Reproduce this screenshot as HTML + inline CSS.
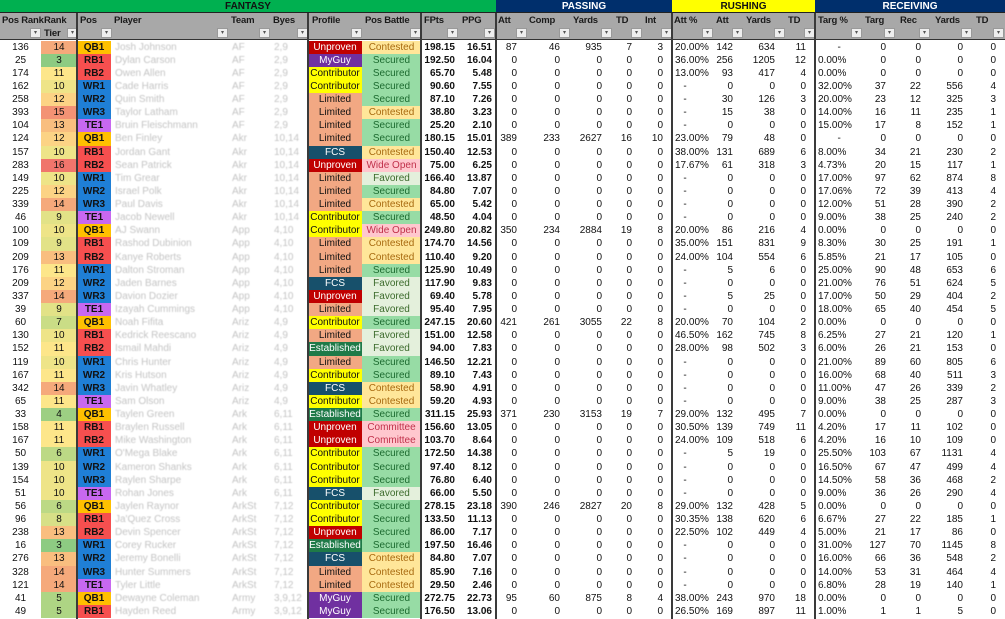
<!DOCTYPE html>
<html><head><meta charset="utf-8">
<style>
*{margin:0;padding:0;box-sizing:border-box}
body{width:1005px;height:619px;overflow:hidden;background:#fff;font-family:"Liberation Sans",sans-serif;font-size:10px;color:#111;position:relative}
.g{position:absolute;top:0;height:13px;font-weight:bold;font-size:10px;text-align:center;line-height:13px;border-bottom:1px solid #222}
.hd{position:absolute;top:13px;height:27px;background:#a8a8a8;border-bottom:1px solid #333}
.hl{position:absolute;top:15px;font-weight:bold;font-size:9.5px;letter-spacing:-0.2px;color:#1a1a1a}
.fb{position:absolute;top:28px;width:11px;height:10px;background:#eee;border:1px solid #999;font-size:6px;line-height:8px;text-align:center;color:#555}
.vl{position:absolute;top:13px;width:2px;height:606px;background:#3a3a3a}
table{position:absolute;top:40.5px;left:0;border-collapse:collapse;table-layout:fixed;width:1005px}
td{height:13.14px;line-height:13px;padding:0;white-space:nowrap;overflow:hidden;font-size:10px}
td:nth-child(1),td:nth-child(2),td:nth-child(3),td:nth-child(7),td:nth-child(8){text-align:center}
td:nth-child(3){font-weight:bold}
td:nth-child(4),td:nth-child(5),td:nth-child(6){padding-left:4px;color:#c4c4c4;filter:blur(0.6px)}
td:nth-child(9),td:nth-child(10){text-align:right;padding-right:4px;font-weight:bold}
td:nth-child(n+11){text-align:right;padding-right:9px}
td:nth-child(16),td:nth-child(20){text-align:left;padding-left:3px;padding-right:0}
.t3{background:#8dcb82}.t4{background:#9dcf83}.t5{background:#aed584}.t6{background:#bcd985}.t7{background:#cadd86}.t8{background:#d7e087}.t9{background:#e2e287}.t10{background:#eee488}.t11{background:#fde68a}.t12{background:#fcd385}.t13{background:#f9be7f}.t14{background:#f5a97b}.t15{background:#f39274}.t16{background:#f0756c}
.q{background:#ffc000}.r{background:#f64f4f}.w{background:#1f7fd6}.e{background:#c868f0}
.pU{background:#c00000;color:#fff}.pM{background:#7030a0;color:#fff}.pC{background:#ffff00}.pL{background:#f2a883}.pF{background:#17506b;color:#fff}.pE{background:#1f7a48;color:#fff}
.bS{background:#97dca5;color:#1d6b30}.bC{background:#ffe699;color:#a86a10}.bW{background:#ffc7ce;color:#c0304a}.bF{background:#e4f0dc;color:#3c6b2c}
</style></head><body>
<div class="g" style="left:0;width:496px;background:#00b050;color:#111">FANTASY</div>
<div class="g" style="left:496px;width:176px;background:#002f6c;color:#fff">PASSING</div>
<div class="g" style="left:672px;width:143px;background:#ffff00;color:#111">RUSHING</div>
<div class="g" style="left:815px;width:190px;background:#002f6c;color:#fff">RECEIVING</div>
<div class="hd" style="left:0;width:1005px"></div>
<div class="hl" style="left:2px">Pos Rank</div>
<div class="hl" style="left:44px">Rank</div><div class="hl" style="left:44px;top:28px">Tier</div>
<div class="hl" style="left:80px">Pos</div>
<div class="hl" style="left:114px">Player</div>
<div class="hl" style="left:231px">Team</div>
<div class="hl" style="left:273px">Byes</div>
<div class="hl" style="left:312px">Profile</div>
<div class="hl" style="left:365px">Pos Battle</div>
<div class="hl" style="left:424px">FPts</div>
<div class="hl" style="left:462px">PPG</div>
<div class="hl" style="left:498px">Att</div>
<div class="hl" style="left:529px">Comp</div>
<div class="hl" style="left:573px">Yards</div>
<div class="hl" style="left:616px">TD</div>
<div class="hl" style="left:645px">Int</div>
<div class="hl" style="left:674px">Att %</div>
<div class="hl" style="left:716px">Att</div>
<div class="hl" style="left:746px">Yards</div>
<div class="hl" style="left:788px">TD</div>
<div class="hl" style="left:818px">Targ %</div>
<div class="hl" style="left:865px">Targ</div>
<div class="hl" style="left:900px">Rec</div>
<div class="hl" style="left:935px">Yards</div>
<div class="hl" style="left:976px">TD</div>
<div class="fb" style="left:30px">▾</div><div class="fb" style="left:67px">▾</div><div class="fb" style="left:101px">▾</div><div class="fb" style="left:217px">▾</div><div class="fb" style="left:259px">▾</div><div class="fb" style="left:297px">▾</div><div class="fb" style="left:351px">▾</div><div class="fb" style="left:410px">▾</div><div class="fb" style="left:447px">▾</div><div class="fb" style="left:484px">▾</div>
<div class="fb" style="left:516px">▾</div><div class="fb" style="left:559px">▾</div><div class="fb" style="left:601px">▾</div><div class="fb" style="left:631px">▾</div><div class="fb" style="left:661px">▾</div>
<div class="fb" style="left:702px">▾</div><div class="fb" style="left:732px">▾</div><div class="fb" style="left:774px">▾</div><div class="fb" style="left:804px">▾</div>
<div class="fb" style="left:851px">▾</div><div class="fb" style="left:884px">▾</div><div class="fb" style="left:919px">▾</div><div class="fb" style="left:961px">▾</div><div class="fb" style="left:993px">▾</div>
<table>
<colgroup><col style="width:41px"><col style="width:36px"><col style="width:34px"><col style="width:117px"><col style="width:42px"><col style="width:38px"><col style="width:54px"><col style="width:59px"><col style="width:38px"><col style="width:37px"><col style="width:30px"><col style="width:43px"><col style="width:42px"><col style="width:30px"><col style="width:31px"><col style="width:40px"><col style="width:30px"><col style="width:42px"><col style="width:31px"><col style="width:47px"><col style="width:33px"><col style="width:35px"><col style="width:42px"><col style="width:33px"></colgroup>
<tr><td>136</td><td class="t14">14</td><td class="q">QB1</td><td>Josh Johnson</td><td>AF</td><td>2,9</td><td class="pU">Unproven</td><td class="bC">Contested</td><td>198.15</td><td>16.51</td><td>87</td><td>46</td><td>935</td><td>7</td><td>3</td><td>20.00%</td><td>142</td><td>634</td><td>11</td><td>&nbsp;&nbsp;&nbsp;&nbsp;&nbsp;&nbsp;&nbsp;-</td><td>0</td><td>0</td><td>0</td><td>0</td></tr>
<tr><td>25</td><td class="t3">3</td><td class="r">RB1</td><td>Dylan Carson</td><td>AF</td><td>2,9</td><td class="pM">MyGuy</td><td class="bS">Secured</td><td>192.50</td><td>16.04</td><td>0</td><td>0</td><td>0</td><td>0</td><td>0</td><td>36.00%</td><td>256</td><td>1205</td><td>12</td><td>0.00%</td><td>0</td><td>0</td><td>0</td><td>0</td></tr>
<tr><td>174</td><td class="t11">11</td><td class="r">RB2</td><td>Owen Allen</td><td>AF</td><td>2,9</td><td class="pC">Contributor</td><td class="bS">Secured</td><td>65.70</td><td>5.48</td><td>0</td><td>0</td><td>0</td><td>0</td><td>0</td><td>13.00%</td><td>93</td><td>417</td><td>4</td><td>0.00%</td><td>0</td><td>0</td><td>0</td><td>0</td></tr>
<tr><td>162</td><td class="t10">10</td><td class="w">WR1</td><td>Cade Harris</td><td>AF</td><td>2,9</td><td class="pC">Contributor</td><td class="bS">Secured</td><td>90.60</td><td>7.55</td><td>0</td><td>0</td><td>0</td><td>0</td><td>0</td><td>&nbsp;&nbsp;&nbsp;-</td><td>0</td><td>0</td><td>0</td><td>32.00%</td><td>37</td><td>22</td><td>556</td><td>4</td></tr>
<tr><td>258</td><td class="t12">12</td><td class="w">WR2</td><td>Quin Smith</td><td>AF</td><td>2,9</td><td class="pL">Limited</td><td class="bS">Secured</td><td>87.10</td><td>7.26</td><td>0</td><td>0</td><td>0</td><td>0</td><td>0</td><td>&nbsp;&nbsp;&nbsp;-</td><td>30</td><td>126</td><td>3</td><td>20.00%</td><td>23</td><td>12</td><td>325</td><td>3</td></tr>
<tr><td>393</td><td class="t15">15</td><td class="w">WR3</td><td>Taylor Latham</td><td>AF</td><td>2,9</td><td class="pL">Limited</td><td class="bC">Contested</td><td>38.80</td><td>3.23</td><td>0</td><td>0</td><td>0</td><td>0</td><td>0</td><td>&nbsp;&nbsp;&nbsp;-</td><td>15</td><td>38</td><td>0</td><td>14.00%</td><td>16</td><td>11</td><td>235</td><td>1</td></tr>
<tr><td>104</td><td class="t13">13</td><td class="e">TE1</td><td>Bruin Fleischmann</td><td>AF</td><td>2,9</td><td class="pL">Limited</td><td class="bS">Secured</td><td>25.20</td><td>2.10</td><td>0</td><td>0</td><td>0</td><td>0</td><td>0</td><td>&nbsp;&nbsp;&nbsp;-</td><td>0</td><td>0</td><td>0</td><td>15.00%</td><td>17</td><td>8</td><td>152</td><td>1</td></tr>
<tr><td>124</td><td class="t12">12</td><td class="q">QB1</td><td>Ben Finley</td><td>Akr</td><td>10,14</td><td class="pL">Limited</td><td class="bS">Secured</td><td>180.15</td><td>15.01</td><td>389</td><td>233</td><td>2627</td><td>16</td><td>10</td><td>23.00%</td><td>79</td><td>48</td><td>0</td><td>&nbsp;&nbsp;&nbsp;&nbsp;&nbsp;&nbsp;&nbsp;-</td><td>0</td><td>0</td><td>0</td><td>0</td></tr>
<tr><td>157</td><td class="t10">10</td><td class="r">RB1</td><td>Jordan Gant</td><td>Akr</td><td>10,14</td><td class="pF">FCS</td><td class="bC">Contested</td><td>150.40</td><td>12.53</td><td>0</td><td>0</td><td>0</td><td>0</td><td>0</td><td>38.00%</td><td>131</td><td>689</td><td>6</td><td>8.00%</td><td>34</td><td>21</td><td>230</td><td>2</td></tr>
<tr><td>283</td><td class="t16">16</td><td class="r">RB2</td><td>Sean Patrick</td><td>Akr</td><td>10,14</td><td class="pU">Unproven</td><td class="bW">Wide Open</td><td>75.00</td><td>6.25</td><td>0</td><td>0</td><td>0</td><td>0</td><td>0</td><td>17.67%</td><td>61</td><td>318</td><td>3</td><td>4.73%</td><td>20</td><td>15</td><td>117</td><td>1</td></tr>
<tr><td>149</td><td class="t10">10</td><td class="w">WR1</td><td>Tim Grear</td><td>Akr</td><td>10,14</td><td class="pL">Limited</td><td class="bF">Favored</td><td>166.40</td><td>13.87</td><td>0</td><td>0</td><td>0</td><td>0</td><td>0</td><td>&nbsp;&nbsp;&nbsp;-</td><td>0</td><td>0</td><td>0</td><td>17.00%</td><td>97</td><td>62</td><td>874</td><td>8</td></tr>
<tr><td>225</td><td class="t12">12</td><td class="w">WR2</td><td>Israel Polk</td><td>Akr</td><td>10,14</td><td class="pL">Limited</td><td class="bS">Secured</td><td>84.80</td><td>7.07</td><td>0</td><td>0</td><td>0</td><td>0</td><td>0</td><td>&nbsp;&nbsp;&nbsp;-</td><td>0</td><td>0</td><td>0</td><td>17.06%</td><td>72</td><td>39</td><td>413</td><td>4</td></tr>
<tr><td>339</td><td class="t14">14</td><td class="w">WR3</td><td>Paul Davis</td><td>Akr</td><td>10,14</td><td class="pL">Limited</td><td class="bC">Contested</td><td>65.00</td><td>5.42</td><td>0</td><td>0</td><td>0</td><td>0</td><td>0</td><td>&nbsp;&nbsp;&nbsp;-</td><td>0</td><td>0</td><td>0</td><td>12.00%</td><td>51</td><td>28</td><td>390</td><td>2</td></tr>
<tr><td>46</td><td class="t9">9</td><td class="e">TE1</td><td>Jacob Newell</td><td>Akr</td><td>10,14</td><td class="pC">Contributor</td><td class="bS">Secured</td><td>48.50</td><td>4.04</td><td>0</td><td>0</td><td>0</td><td>0</td><td>0</td><td>&nbsp;&nbsp;&nbsp;-</td><td>0</td><td>0</td><td>0</td><td>9.00%</td><td>38</td><td>25</td><td>240</td><td>2</td></tr>
<tr><td>100</td><td class="t10">10</td><td class="q">QB1</td><td>AJ Swann</td><td>App</td><td>4,10</td><td class="pC">Contributor</td><td class="bW">Wide Open</td><td>249.80</td><td>20.82</td><td>350</td><td>234</td><td>2884</td><td>19</td><td>8</td><td>20.00%</td><td>86</td><td>216</td><td>4</td><td>0.00%</td><td>0</td><td>0</td><td>0</td><td>0</td></tr>
<tr><td>109</td><td class="t9">9</td><td class="r">RB1</td><td>Rashod Dubinion</td><td>App</td><td>4,10</td><td class="pL">Limited</td><td class="bC">Contested</td><td>174.70</td><td>14.56</td><td>0</td><td>0</td><td>0</td><td>0</td><td>0</td><td>35.00%</td><td>151</td><td>831</td><td>9</td><td>8.30%</td><td>30</td><td>25</td><td>191</td><td>1</td></tr>
<tr><td>209</td><td class="t13">13</td><td class="r">RB2</td><td>Kanye Roberts</td><td>App</td><td>4,10</td><td class="pL">Limited</td><td class="bC">Contested</td><td>110.40</td><td>9.20</td><td>0</td><td>0</td><td>0</td><td>0</td><td>0</td><td>24.00%</td><td>104</td><td>554</td><td>6</td><td>5.85%</td><td>21</td><td>17</td><td>105</td><td>0</td></tr>
<tr><td>176</td><td class="t11">11</td><td class="w">WR1</td><td>Dalton Stroman</td><td>App</td><td>4,10</td><td class="pL">Limited</td><td class="bS">Secured</td><td>125.90</td><td>10.49</td><td>0</td><td>0</td><td>0</td><td>0</td><td>0</td><td>&nbsp;&nbsp;&nbsp;-</td><td>5</td><td>6</td><td>0</td><td>25.00%</td><td>90</td><td>48</td><td>653</td><td>6</td></tr>
<tr><td>209</td><td class="t12">12</td><td class="w">WR2</td><td>Jaden Barnes</td><td>App</td><td>4,10</td><td class="pF">FCS</td><td class="bF">Favored</td><td>117.90</td><td>9.83</td><td>0</td><td>0</td><td>0</td><td>0</td><td>0</td><td>&nbsp;&nbsp;&nbsp;-</td><td>0</td><td>0</td><td>0</td><td>21.00%</td><td>76</td><td>51</td><td>624</td><td>5</td></tr>
<tr><td>337</td><td class="t14">14</td><td class="w">WR3</td><td>Davion Dozier</td><td>App</td><td>4,10</td><td class="pU">Unproven</td><td class="bF">Favored</td><td>69.40</td><td>5.78</td><td>0</td><td>0</td><td>0</td><td>0</td><td>0</td><td>&nbsp;&nbsp;&nbsp;-</td><td>5</td><td>25</td><td>0</td><td>17.00%</td><td>50</td><td>29</td><td>404</td><td>2</td></tr>
<tr><td>39</td><td class="t9">9</td><td class="e">TE1</td><td>Izayah Cummings</td><td>App</td><td>4,10</td><td class="pL">Limited</td><td class="bF">Favored</td><td>95.40</td><td>7.95</td><td>0</td><td>0</td><td>0</td><td>0</td><td>0</td><td>&nbsp;&nbsp;&nbsp;-</td><td>0</td><td>0</td><td>0</td><td>18.00%</td><td>65</td><td>40</td><td>454</td><td>5</td></tr>
<tr><td>60</td><td class="t7">7</td><td class="q">QB1</td><td>Noah Fifita</td><td>Ariz</td><td>4,9</td><td class="pC">Contributor</td><td class="bS">Secured</td><td>247.15</td><td>20.60</td><td>421</td><td>261</td><td>3055</td><td>22</td><td>8</td><td>20.00%</td><td>70</td><td>104</td><td>2</td><td>0.00%</td><td>0</td><td>0</td><td>0</td><td>0</td></tr>
<tr><td>130</td><td class="t10">10</td><td class="r">RB1</td><td>Kedrick Reescano</td><td>Ariz</td><td>4,9</td><td class="pL">Limited</td><td class="bF">Favored</td><td>151.00</td><td>12.58</td><td>0</td><td>0</td><td>0</td><td>0</td><td>0</td><td>46.50%</td><td>162</td><td>745</td><td>8</td><td>6.25%</td><td>27</td><td>21</td><td>120</td><td>1</td></tr>
<tr><td>152</td><td class="t11">11</td><td class="r">RB2</td><td>Ismail Mahdi</td><td>Ariz</td><td>4,9</td><td class="pE">Established</td><td class="bF">Favored</td><td>94.00</td><td>7.83</td><td>0</td><td>0</td><td>0</td><td>0</td><td>0</td><td>28.00%</td><td>98</td><td>502</td><td>3</td><td>6.00%</td><td>26</td><td>21</td><td>153</td><td>0</td></tr>
<tr><td>119</td><td class="t10">10</td><td class="w">WR1</td><td>Chris Hunter</td><td>Ariz</td><td>4,9</td><td class="pL">Limited</td><td class="bS">Secured</td><td>146.50</td><td>12.21</td><td>0</td><td>0</td><td>0</td><td>0</td><td>0</td><td>&nbsp;&nbsp;&nbsp;-</td><td>0</td><td>0</td><td>0</td><td>21.00%</td><td>89</td><td>60</td><td>805</td><td>6</td></tr>
<tr><td>167</td><td class="t11">11</td><td class="w">WR2</td><td>Kris Hutson</td><td>Ariz</td><td>4,9</td><td class="pC">Contributor</td><td class="bS">Secured</td><td>89.10</td><td>7.43</td><td>0</td><td>0</td><td>0</td><td>0</td><td>0</td><td>&nbsp;&nbsp;&nbsp;-</td><td>0</td><td>0</td><td>0</td><td>16.00%</td><td>68</td><td>40</td><td>511</td><td>3</td></tr>
<tr><td>342</td><td class="t14">14</td><td class="w">WR3</td><td>Javin Whatley</td><td>Ariz</td><td>4,9</td><td class="pF">FCS</td><td class="bC">Contested</td><td>58.90</td><td>4.91</td><td>0</td><td>0</td><td>0</td><td>0</td><td>0</td><td>&nbsp;&nbsp;&nbsp;-</td><td>0</td><td>0</td><td>0</td><td>11.00%</td><td>47</td><td>26</td><td>339</td><td>2</td></tr>
<tr><td>65</td><td class="t11">11</td><td class="e">TE1</td><td>Sam Olson</td><td>Ariz</td><td>4,9</td><td class="pC">Contributor</td><td class="bC">Contested</td><td>59.20</td><td>4.93</td><td>0</td><td>0</td><td>0</td><td>0</td><td>0</td><td>&nbsp;&nbsp;&nbsp;-</td><td>0</td><td>0</td><td>0</td><td>9.00%</td><td>38</td><td>25</td><td>287</td><td>3</td></tr>
<tr><td>33</td><td class="t4">4</td><td class="q">QB1</td><td>Taylen Green</td><td>Ark</td><td>6,11</td><td class="pE">Established</td><td class="bS">Secured</td><td>311.15</td><td>25.93</td><td>371</td><td>230</td><td>3153</td><td>19</td><td>7</td><td>29.00%</td><td>132</td><td>495</td><td>7</td><td>0.00%</td><td>0</td><td>0</td><td>0</td><td>0</td></tr>
<tr><td>158</td><td class="t11">11</td><td class="r">RB1</td><td>Braylen Russell</td><td>Ark</td><td>6,11</td><td class="pU">Unproven</td><td class="bW">Committee</td><td>156.60</td><td>13.05</td><td>0</td><td>0</td><td>0</td><td>0</td><td>0</td><td>30.50%</td><td>139</td><td>749</td><td>11</td><td>4.20%</td><td>17</td><td>11</td><td>102</td><td>0</td></tr>
<tr><td>167</td><td class="t11">11</td><td class="r">RB2</td><td>Mike Washington</td><td>Ark</td><td>6,11</td><td class="pU">Unproven</td><td class="bW">Committee</td><td>103.70</td><td>8.64</td><td>0</td><td>0</td><td>0</td><td>0</td><td>0</td><td>24.00%</td><td>109</td><td>518</td><td>6</td><td>4.20%</td><td>16</td><td>10</td><td>109</td><td>0</td></tr>
<tr><td>50</td><td class="t6">6</td><td class="w">WR1</td><td>O'Mega Blake</td><td>Ark</td><td>6,11</td><td class="pC">Contributor</td><td class="bS">Secured</td><td>172.50</td><td>14.38</td><td>0</td><td>0</td><td>0</td><td>0</td><td>0</td><td>&nbsp;&nbsp;&nbsp;-</td><td>5</td><td>19</td><td>0</td><td>25.50%</td><td>103</td><td>67</td><td>1131</td><td>4</td></tr>
<tr><td>139</td><td class="t10">10</td><td class="w">WR2</td><td>Kameron Shanks</td><td>Ark</td><td>6,11</td><td class="pC">Contributor</td><td class="bS">Secured</td><td>97.40</td><td>8.12</td><td>0</td><td>0</td><td>0</td><td>0</td><td>0</td><td>&nbsp;&nbsp;&nbsp;-</td><td>0</td><td>0</td><td>0</td><td>16.50%</td><td>67</td><td>47</td><td>499</td><td>4</td></tr>
<tr><td>154</td><td class="t10">10</td><td class="w">WR3</td><td>Raylen Sharpe</td><td>Ark</td><td>6,11</td><td class="pC">Contributor</td><td class="bS">Secured</td><td>76.80</td><td>6.40</td><td>0</td><td>0</td><td>0</td><td>0</td><td>0</td><td>&nbsp;&nbsp;&nbsp;-</td><td>0</td><td>0</td><td>0</td><td>14.50%</td><td>58</td><td>36</td><td>468</td><td>2</td></tr>
<tr><td>51</td><td class="t10">10</td><td class="e">TE1</td><td>Rohan Jones</td><td>Ark</td><td>6,11</td><td class="pF">FCS</td><td class="bF">Favored</td><td>66.00</td><td>5.50</td><td>0</td><td>0</td><td>0</td><td>0</td><td>0</td><td>&nbsp;&nbsp;&nbsp;-</td><td>0</td><td>0</td><td>0</td><td>9.00%</td><td>36</td><td>26</td><td>290</td><td>4</td></tr>
<tr><td>56</td><td class="t6">6</td><td class="q">QB1</td><td>Jaylen Raynor</td><td>ArkSt</td><td>7,12</td><td class="pC">Contributor</td><td class="bS">Secured</td><td>278.15</td><td>23.18</td><td>390</td><td>246</td><td>2827</td><td>20</td><td>8</td><td>29.00%</td><td>132</td><td>428</td><td>5</td><td>0.00%</td><td>0</td><td>0</td><td>0</td><td>0</td></tr>
<tr><td>96</td><td class="t8">8</td><td class="r">RB1</td><td>Ja'Quez Cross</td><td>ArkSt</td><td>7,12</td><td class="pC">Contributor</td><td class="bS">Secured</td><td>133.50</td><td>11.13</td><td>0</td><td>0</td><td>0</td><td>0</td><td>0</td><td>30.35%</td><td>138</td><td>620</td><td>6</td><td>6.67%</td><td>27</td><td>22</td><td>185</td><td>1</td></tr>
<tr><td>238</td><td class="t13">13</td><td class="r">RB2</td><td>Devin Spencer</td><td>ArkSt</td><td>7,12</td><td class="pU">Unproven</td><td class="bS">Secured</td><td>86.00</td><td>7.17</td><td>0</td><td>0</td><td>0</td><td>0</td><td>0</td><td>22.50%</td><td>102</td><td>449</td><td>4</td><td>5.00%</td><td>21</td><td>17</td><td>86</td><td>0</td></tr>
<tr><td>16</td><td class="t3">3</td><td class="w">WR1</td><td>Corey Rucker</td><td>ArkSt</td><td>7,12</td><td class="pE">Established</td><td class="bS">Secured</td><td>197.50</td><td>16.46</td><td>0</td><td>0</td><td>0</td><td>0</td><td>0</td><td>&nbsp;&nbsp;&nbsp;-</td><td>0</td><td>0</td><td>0</td><td>31.00%</td><td>127</td><td>70</td><td>1145</td><td>8</td></tr>
<tr><td>276</td><td class="t13">13</td><td class="w">WR2</td><td>Jeremy Bonelli</td><td>ArkSt</td><td>7,12</td><td class="pF">FCS</td><td class="bC">Contested</td><td>84.80</td><td>7.07</td><td>0</td><td>0</td><td>0</td><td>0</td><td>0</td><td>&nbsp;&nbsp;&nbsp;-</td><td>0</td><td>0</td><td>0</td><td>16.00%</td><td>66</td><td>36</td><td>548</td><td>2</td></tr>
<tr><td>328</td><td class="t14">14</td><td class="w">WR3</td><td>Hunter Summers</td><td>ArkSt</td><td>7,12</td><td class="pL">Limited</td><td class="bC">Contested</td><td>85.90</td><td>7.16</td><td>0</td><td>0</td><td>0</td><td>0</td><td>0</td><td>&nbsp;&nbsp;&nbsp;-</td><td>0</td><td>0</td><td>0</td><td>14.00%</td><td>53</td><td>31</td><td>464</td><td>4</td></tr>
<tr><td>121</td><td class="t14">14</td><td class="e">TE1</td><td>Tyler Little</td><td>ArkSt</td><td>7,12</td><td class="pL">Limited</td><td class="bC">Contested</td><td>29.50</td><td>2.46</td><td>0</td><td>0</td><td>0</td><td>0</td><td>0</td><td>&nbsp;&nbsp;&nbsp;-</td><td>0</td><td>0</td><td>0</td><td>6.80%</td><td>28</td><td>19</td><td>140</td><td>1</td></tr>
<tr><td>41</td><td class="t5">5</td><td class="q">QB1</td><td>Dewayne Coleman</td><td>Army</td><td>3,9,12</td><td class="pM">MyGuy</td><td class="bS">Secured</td><td>272.75</td><td>22.73</td><td>95</td><td>60</td><td>875</td><td>8</td><td>4</td><td>38.00%</td><td>243</td><td>970</td><td>18</td><td>0.00%</td><td>0</td><td>0</td><td>0</td><td>0</td></tr>
<tr><td>49</td><td class="t5">5</td><td class="r">RB1</td><td>Hayden Reed</td><td>Army</td><td>3,9,12</td><td class="pM">MyGuy</td><td class="bS">Secured</td><td>176.50</td><td>13.06</td><td>0</td><td>0</td><td>0</td><td>0</td><td>0</td><td>26.50%</td><td>169</td><td>897</td><td>11</td><td>1.00%</td><td>1</td><td>1</td><td>5</td><td>0</td></tr>
</table>
<div class="vl" style="left:76px"></div>
<div class="vl" style="left:307px"></div>
<div class="vl" style="left:420px"></div>
<div class="vl" style="left:495px"></div>
<div class="vl" style="left:671px"></div>
<div class="vl" style="left:814px"></div>
</body></html>
